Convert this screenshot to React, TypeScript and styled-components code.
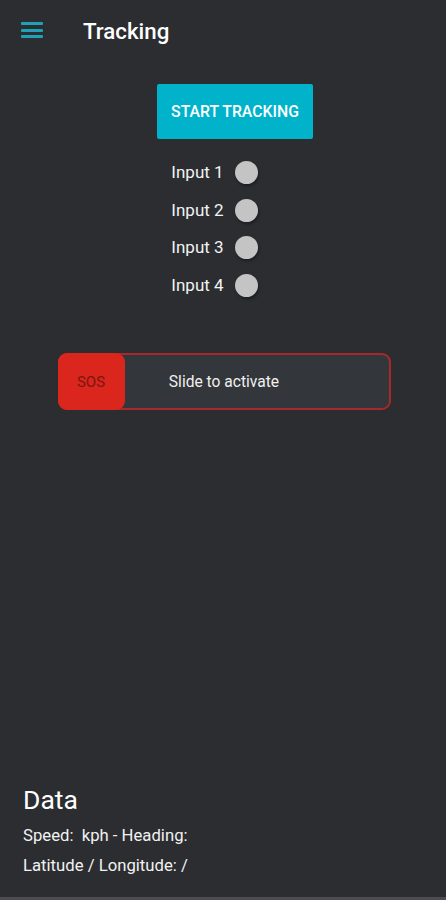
import React from 'react'
import styled, { createGlobalStyle } from 'styled-components'

const GlobalStyle = createGlobalStyle`
  html, body {
    margin: 0;
    padding: 0;
    background: #2b2d31;
  }
  * {
    box-sizing: border-box;
  }
`

const Screen = styled.div`
  width: 100vw;
  height: 100vh;
  background: #2b2d31;
  color: #ffffff;
  font-family: Roboto, "Noto Sans", sans-serif;
  display: flex;
  flex-direction: column;
  border-bottom: 3px solid #4b4d51;
  overflow: hidden;
`

const TopBar = styled.header`
  height: 62px;
  display: flex;
  align-items: center;
  padding-left: 21px;
  flex-shrink: 0;
`

const MenuButton = styled.button`
  width: 22px;
  height: 16px;
  padding: 0;
  border: none;
  background: transparent;
  display: flex;
  flex-direction: column;
  justify-content: space-between;
  cursor: pointer;
  margin-top: -2px;
`

const MenuLine = styled.span`
  display: block;
  height: 3px;
  width: 100%;
  background: #1fa2b5;
  border-radius: 1px;
`

const Title = styled.h1`
  margin: 0 0 0 40px;
  font-size: 22.3px;
  font-weight: 500;
  color: #ffffff;
`

const Main = styled.main`
  flex: 1;
  display: flex;
  flex-direction: column;
  align-items: center;
  padding-top: 22px;
`

const StartButton = styled.button`
  width: 156px;
  height: 55px;
  margin-left: 24px;
  border: none;
  border-radius: 2px;
  background: #00b3cb;
  color: #ffffff;
  font-family: Roboto, "Noto Sans", sans-serif;
  font-size: 15.8px;
  font-weight: 500;
  cursor: pointer;
`

const InputList = styled.div`
  display: flex;
  flex-direction: column;
  align-items: center;
  margin-top: 15px;
  padding-right: 17px;
`

const InputRow = styled.div`
  height: 37.5px;
  display: flex;
  align-items: center;
  gap: 11px;
`

const InputLabel = styled.span`
  font-size: 17px;
  color: #f2f2f2;
  margin-top: -1px;
`

const Led = styled.span<{ $on?: boolean }>`
  width: 23px;
  height: 23px;
  border-radius: 50%;
  background: ${p => (p.$on ? '#33d17a' : '#c4c4c4')};
  box-shadow: 1px 2px 3px rgba(0, 0, 0, 0.35);
`

const SlideTrack = styled.div`
  position: relative;
  margin-top: 49px;
  margin-left: 2px;
  width: 333px;
  height: 57px;
  border: 2px solid #a8292b;
  border-radius: 9px;
  background: #33363a;
  display: flex;
  align-items: center;
  justify-content: center;
`

const SlideText = styled.span`
  font-size: 15.6px;
  color: #f0f0f0;
`

const SosKnob = styled.div`
  position: absolute;
  left: -2px;
  top: -2px;
  bottom: -2px;
  width: 67px;
  border-radius: 9px;
  background: #da261c;
  color: #7d1510;
  font-size: 15px;
  display: flex;
  align-items: center;
  justify-content: center;
`

const DataSection = styled.section`
  padding: 0 0 16px 23px;
  flex-shrink: 0;
`

const DataTitle = styled.h2`
  margin: 0 0 7px;
  font-size: 26.5px;
  font-weight: 400;
  line-height: 28px;
  color: #ffffff;
`

const DataLine = styled.p`
  margin: 0;
  font-size: 16.7px;
  line-height: 30px;
  color: #f2f2f2;
`

const inputs = ['Input 1', 'Input 2', 'Input 3', 'Input 4']

const App: React.FC = () => {
  return (
    <>
      <GlobalStyle />
      <Screen>
        <TopBar>
          <MenuButton aria-label="menu">
            <MenuLine />
            <MenuLine />
            <MenuLine />
          </MenuButton>
          <Title>Tracking</Title>
        </TopBar>

        <Main>
          <StartButton>START TRACKING</StartButton>

          <InputList>
            {inputs.map(name => (
              <InputRow key={name}>
                <InputLabel>{name}</InputLabel>
                <Led />
              </InputRow>
            ))}
          </InputList>

          <SlideTrack>
            <SlideText>Slide to activate</SlideText>
            <SosKnob>SOS</SosKnob>
          </SlideTrack>
        </Main>

        <DataSection>
          <DataTitle>Data</DataTitle>
          <DataLine>Speed:&nbsp; kph - Heading:</DataLine>
          <DataLine>Latitude / Longitude: /</DataLine>
        </DataSection>
      </Screen>
    </>
  )
}

export default App
